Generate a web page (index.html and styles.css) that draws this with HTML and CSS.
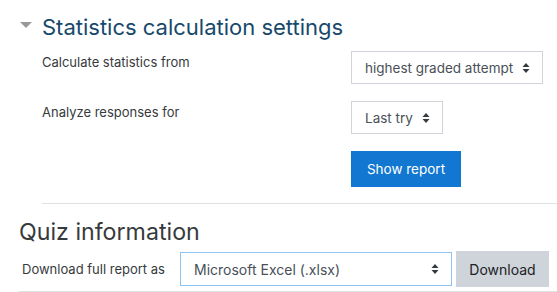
FILE: index.html
```html
<!DOCTYPE html>
<html lang="en">
<head>
    <meta charset="UTF-8">
    <title>Quiz statistics</title>
    <link rel="stylesheet" href="styles.css">
</head>
<body>
    <fieldset class="settings">
        <div class="legend">
            <span class="toggle"></span>
            <h3>Statistics calculation settings</h3>
        </div>
        <div class="row">
            <label class="lbl">Calculate statistics from</label>
            <div class="ctl">
                <span class="select">highest graded attempt <svg class="arr" viewBox="0 0 8 12"><path d="M4 1 L7.5 5 H0.5 Z M4 11 L7.5 7 H0.5 Z"/></svg></span>
            </div>
        </div>
        <div class="row">
            <label class="lbl">Analyze responses for</label>
            <div class="ctl">
                <span class="select">Last try <svg class="arr" viewBox="0 0 8 12"><path d="M4 1 L7.5 5 H0.5 Z M4 11 L7.5 7 H0.5 Z"/></svg></span>
            </div>
        </div>
        <div class="row">
            <div class="lbl"></div>
            <div class="ctl"><button class="btn-primary">Show report</button></div>
        </div>
    </fieldset>

    <h2 class="info">Quiz information</h2>
    <div class="download">
        <label>Download full report as</label>
        <span class="select wide">Microsoft Excel (.xlsx) <svg class="arr" viewBox="0 0 8 12"><path d="M4 1 L7.5 5 H0.5 Z M4 11 L7.5 7 H0.5 Z"/></svg></span>
        <button class="btn-secondary">Download</button>
    </div>
</body>
</html>
```

FILE: styles.css
```css
* {
    margin: 0;
    padding: 0;
    box-sizing: border-box;
}

body {
    font-family: Inter, "Liberation Sans", sans-serif;
    font-size: 13px;
    color: #373a3c;
    background-color: white;
    width: 557px;
    overflow: hidden;
}

.settings {
    border: none;
    border-bottom: 1px solid #dee2e6;
    margin-left: 42px;
    padding-bottom: 16px;
}

.legend {
    display: flex;
    align-items: center;
    margin-left: -22px;
    height: 51px;
    padding-top: 2px;
}

.toggle {
    width: 0;
    height: 0;
    border-left: 6px solid transparent;
    border-right: 6px solid transparent;
    border-top: 6px solid #999;
    margin-right: 10px;
    margin-bottom: 4px;
}

.legend h3 {
    font-size: 22px;
    font-weight: 400;
    color: #17496b;
}

.row {
    display: flex;
    margin-bottom: 17px;
}
.row:last-child {margin-bottom: 0;}

.lbl {
    width: 309px;
    padding-top: 3px;
}

.select {
    display: inline-flex;
    align-items: center;
    height: 33px;
    padding: 0 12px 0 13px;
    border: 1px solid #ced4da;
    color: #495057;
    font-size: 13.5px;
    background-color: white;
}

.arr {
    width: 8px;
    height: 12px;
    margin-left: 9px;
    fill: #343a40;
}

.btn-primary {
    height: 36px;
    width: 110px;
    border: none;
    background-color: #1177d1;
    color: white;
    font-family: inherit;
    font-size: 13.5px;
}

.info {
    font-size: 23.2px;
    font-weight: 400;
    color: #373a3c;
    margin: 10px 0 0 19px;
    height: 37px;
    line-height: 37px;
}

.download {
    display: flex;
    align-items: center;
    margin-left: 19px;
    padding: 0 0 4px 3px;
    border-bottom: 1px solid #dee2e6;
}

.download label {
    width: 158px;
}

.select.wide {
    width: 272px;
    height: 34px;
    justify-content: space-between;
    border-color: #8cc3f2;
    font-size: 14px;
}

.btn-secondary {
    margin-left: 4px;
    height: 36px;
    width: 93px;
    border: none;
    background-color: #ced4da;
    color: #1d2125;
    font-family: inherit;
    font-size: 14px;
}
```
